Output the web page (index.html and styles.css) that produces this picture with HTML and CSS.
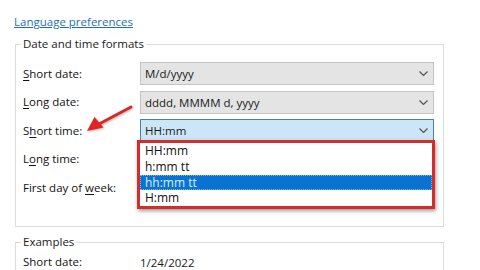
FILE: index.html
```html
<!DOCTYPE html>
<html>
<head>
<meta charset="utf-8">
<link rel="stylesheet" href="styles.css">
</head>
<body>
<div class="page">
  <a class="link" href="#">Language preferences</a>
  <fieldset class="group formats">
    <legend>Date and time formats</legend>
    <div class="grid">
      <span class="label"><u>S</u>hort date:</span>
      <div class="combo"><span>M/d/yyyy</span><svg class="chev" viewBox="0 0 9 5"><path d="M0.5 0.5 L4.5 4.5 L8.5 0.5"/></svg></div>
      <span class="label"><u>L</u>ong date:</span>
      <div class="combo"><span>dddd, MMMM d, yyyy</span><svg class="chev" viewBox="0 0 9 5"><path d="M0.5 0.5 L4.5 4.5 L8.5 0.5"/></svg></div>
      <span class="label">S<u>h</u>ort time:</span>
      <div class="combo-wrap">
        <div class="combo active"><span>HH:mm</span><svg class="chev" viewBox="0 0 9 5"><path d="M0.5 0.5 L4.5 4.5 L8.5 0.5"/></svg></div>
        <ul class="dropdown">
          <li>HH:mm</li>
          <li>h:mm tt</li>
          <li class="sel">hh:mm tt</li>
          <li>H:mm</li>
        </ul>
      </div>
      <span class="label">L<u>o</u>ng time:</span>
      <div class="combo"></div>
      <span class="label">First day of <u>w</u>eek:</span>
      <div class="combo"></div>
    </div>
  </fieldset>
  <fieldset class="group examples">
    <legend>Examples</legend>
    <div class="grid ex">
      <span class="label">Short date:</span>
      <span class="value">1/24/2022</span>
    </div>
  </fieldset>
  <svg class="arrow" viewBox="0 0 50 30" width="50" height="30">
    <path d="M46 2 L14 19" stroke="#e02424" stroke-width="2.8" stroke-linecap="round" fill="none"/>
    <path d="M2 26 L9.5 12 L18.5 22.5 Z" fill="#e02424"/>
  </svg>
</div>
</body>
</html>
```
FILE: styles.css
```css
* { box-sizing: border-box; }
html, body { margin: 0; background: #fff; }
body {
  font-family: "Open Sans", "Noto Sans", sans-serif;
  font-size: 11.5px;
  color: #111;
  width: 480px;
  height: 270px;
  overflow: hidden;
}
.page {
  position: relative;
  height: 270px;
  overflow: hidden;
  padding: 14px 0 0 14px;
}
.link {
  display: block;
  width: max-content;
  line-height: 16px;
  color: #1f6fb8;
  text-decoration: underline;
  margin-bottom: 6px;
}
.group {
  margin: 0 0 0 1px;
  width: 429px;
  min-width: 0;
  border: 1px solid #dcdcdc;
  padding: 10px 8px 27px 7px;
}
.group legend {
  padding: 0 2px;
  margin-left: -2px;
  line-height: 16px;
  color: #1a1a1a;
}
.grid {
  display: grid;
  grid-template-columns: 117px 294px;
  grid-auto-rows: 23px;
  row-gap: 5.5px;
  align-items: center;
}
.label { line-height: 16px; }
.label u { text-decoration-thickness: 1px; text-underline-offset: 2px; }
.combo {
  height: 23px;
  display: flex;
  align-items: center;
  justify-content: space-between;
  padding: 0 5px 0 4px;
  background: #e4e4e4;
  border: 1px solid #c4c4c4;
  color: #1a1a1a;
}
.combo.active {
  background: #cde6f7;
  border-color: #4a7fa6;
}
.chev {
  width: 9px;
  height: 5px;
  fill: none;
  stroke: #555;
  stroke-width: 1.2;
}
.combo-wrap {
  position: relative;
  height: 23px;
}
.dropdown {
  position: absolute;
  z-index: 2;
  top: 21px;
  left: -3px;
  width: 298px;
  margin: 0;
  padding: 0;
  list-style: none;
  background: #fff;
  border: 3px solid #d42b2b;
  box-shadow: 1px 2px 4px rgba(0,0,0,0.4);
}
.dropdown li {
  height: 15.75px;
  line-height: 15.75px;
  padding-left: 5px;
  color: #111;
  font-size: 12px;
}
.dropdown li.sel {
  background: #0a72d0;
  color: #d8f0ff;
  outline: 1px dotted #7fb3e6;
  outline-offset: -1px;
}
.examples {
  margin-top: 7px;
  padding: 3px 8px 20px 7px;
}
.ex { grid-auto-rows: 18px; }
.value { color: #1a1a1a; }
.arrow {
  position: absolute;
  left: 85px;
  top: 105px;
  filter: drop-shadow(1px 1px 1px rgba(0,0,0,0.3));
}
```
